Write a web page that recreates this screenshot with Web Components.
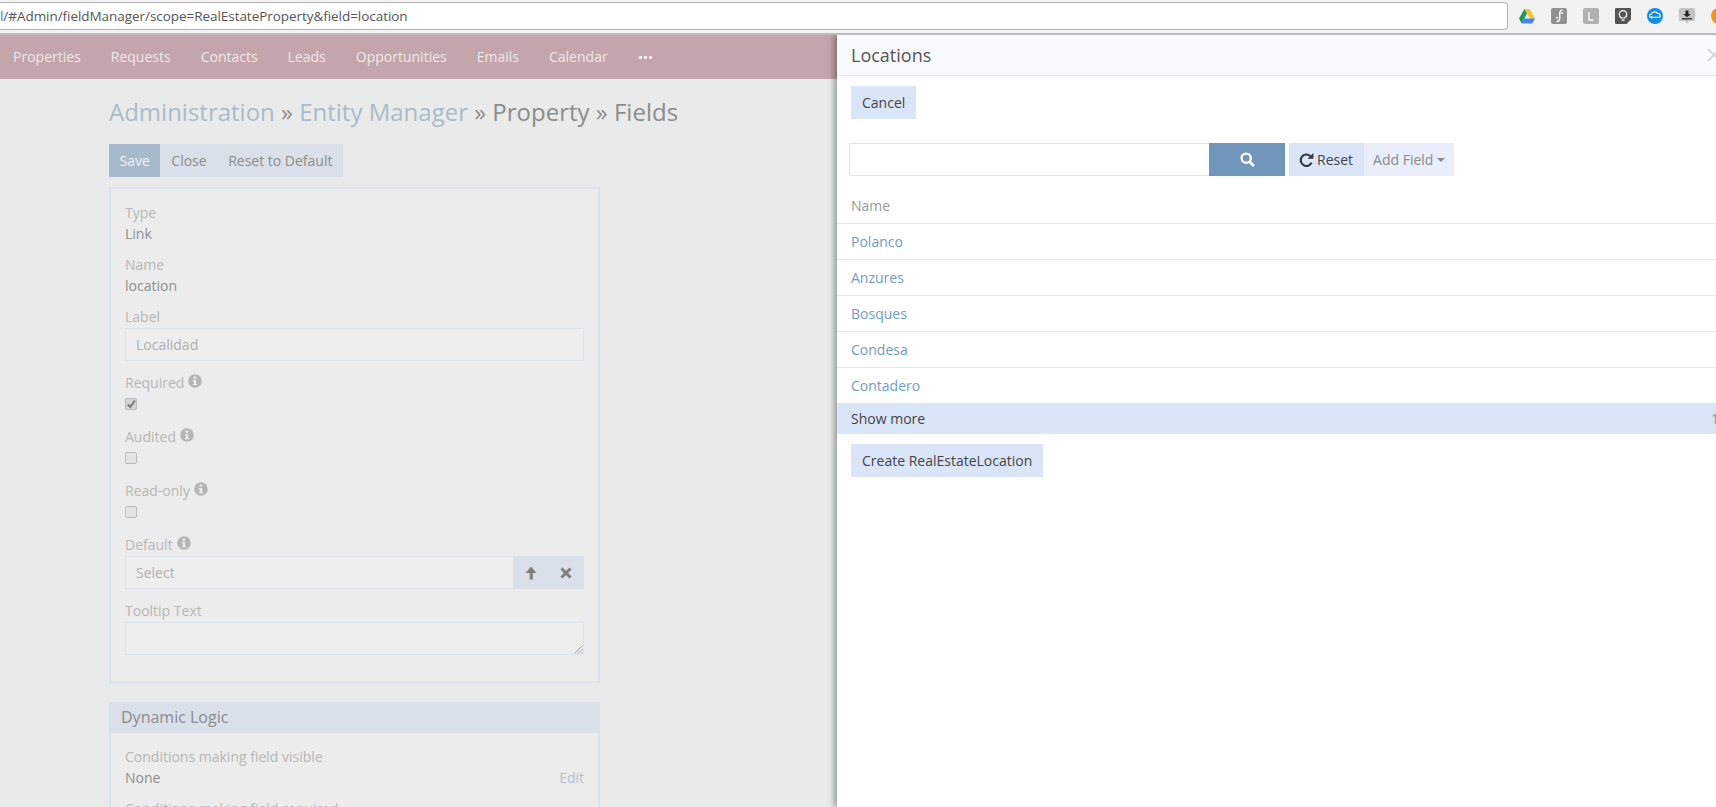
<!DOCTYPE html>
<html><head><meta charset="utf-8">
<style>
html,body{margin:0;padding:0;height:807px;overflow:hidden;background:#e9ebea;font:14px/20px "Open Sans",sans-serif}
</style></head>
<body>
<browser-bar></browser-bar>
<div style="position:relative;height:772px;overflow:hidden">
<app-nav></app-nav>
<admin-page></admin-page>
<locations-modal></locations-modal>
</div>
<script>
function def(name, html){
  customElements.define(name, class extends HTMLElement{
    constructor(){super();this.attachShadow({mode:'open'}).innerHTML=html;}
  });
}
const info='<svg width="14" height="14" viewBox="0 0 14 14" style="vertical-align:0;margin-left:4px"><circle cx="7" cy="7" r="6.8" fill="#b5b5b3"/><rect x="5.6" y="2.6" width="2.6" height="2.2" fill="#ececec"/><path d="M4.800 6h3.400v4h1v1.300H4.800V10h1V7.200h-1z" fill="#ececec"/></svg>';

def('browser-bar',`<style>
:host{display:flex;height:35px;box-sizing:border-box;background:#f2f2f2;border-bottom:2px solid #bcbcbc;padding-top:2px}
.url{flex:none;width:1508px;height:28px;box-sizing:border-box;background:#fff;border:1px solid #b4b4b4;border-left:0;border-radius:0 4px 4px 0;font:13.5px/26px "Open Sans",sans-serif;color:#555;letter-spacing:-.05px;white-space:nowrap}
.url b{font-weight:400;color:#1a8ad8}
.icons{display:flex;align-items:center;height:28px;margin-left:11px;gap:16px}
svg{display:block;flex:none}
</style>
<div class="url"><b>l</b>/#Admin/fieldManager/scope=RealEstateProperty&amp;field=location</div>
<div class="icons">
<svg width="16" height="15" viewBox="0 0 16 15"><path d="M5.400 0h5.200l5.400 9.600h-5.200z" fill="#f8c52c"/><path d="M5.400 0L8 4.600 2.700 14.400 0 9.600z" fill="#1a9c58"/><path d="M5.300 9.600H16l-2.600 4.800H2.700z" fill="#4584ef"/></svg>
<svg width="16" height="16" viewBox="0 0 16 16"><rect width="16" height="16" rx="2" fill="#909090"/><path d="M11.500 2.400C9.600 1.800 9 3.400 8.800 5.500c-.2 2.500.3 3.800-.3 6-.4 1.500-1.500 2.300-3 2" stroke="#fff" stroke-width="1.400" fill="none"/><circle cx="6" cy="9.800" r="1" fill="#fff"/><circle cx="11.200" cy="5.200" r="1" fill="#fff"/></svg>
<svg width="16" height="16" viewBox="0 0 16 16"><rect width="16" height="16" rx="2" fill="#b0b0b0"/><path d="M6 4v8h4.500" stroke="#fff" stroke-width="1.300" fill="none"/></svg>
<svg width="16" height="16" viewBox="0 0 16 16"><path d="M1 0h14a1 1 0 0 1 1 1v10.500L11.500 16H1a1 1 0 0 1-1-1V1a1 1 0 0 1 1-1z" fill="#555"/><path d="M6.300 10C5 8.800 4.300 7.800 4.300 6.400a3.700 3.700 0 0 1 7.400 0c0 1.400-.7 2.400-2 3.600zM6.500 12.200h3" stroke="#fff" stroke-width="1.200" fill="none"/></svg>
<svg width="16" height="16" viewBox="0 0 16 16"><circle cx="8" cy="8" r="8" fill="#0e8ee9"/><path d="M3.200 9.200C1.800 8 2.600 6 4.300 6 5 3.800 9 3 10.500 5.400c1.800-.2 3.300 1.300 2.700 3.800" stroke="#fff" stroke-width="1.200" fill="none"/><path d="M3 9.300l2.200-1.500v1h8v1h-8v1z" fill="#fff"/></svg>
<svg width="16" height="16" viewBox="0 0 16 16"><rect width="16" height="13" rx="1.500" fill="#c4c4c4"/><path d="M6.500 2.500h3V6h2.300L8 9.300 4.200 6h2.300z" fill="#222"/><rect x="3" y="10.200" width="10" height="1.200" fill="#222"/><path d="M6 13h4l-2 2.500z" fill="#c4c4c4"/></svg>
<svg width="16" height="16" viewBox="0 0 16 16"><circle cx="8" cy="8" r="8" fill="#f5950f"/></svg>
</div>`);

def('app-nav',`<style>
:host{display:flex;height:44px;background:#c4a5ac;color:#efe8e9;padding-left:13px;gap:30px;align-items:center;font-size:14px}
span{white-space:nowrap}
.d{display:flex;gap:2px;margin-left:1px}
.d i{width:3px;height:3px;background:#f1ebec}
</style>
<span>Properties</span><span>Requests</span><span>Contacts</span><span>Leads</span><span>Opportunities</span><span>Emails</span><span>Calendar</span><div class="d" aria-hidden="true"><i></i><i></i><i></i></div>`);

def('page-head',`<style>
:host{display:block;font-size:24px;line-height:34px;color:#8c8c8a;white-space:nowrap}
a{color:#a8bbcc}
i{font-style:normal}
</style><a>Administration</a> <i>»</i> <a>Entity Manager</a> <i>»</i> Property <i>»</i> Fields`);

def('action-bar',`<style>
:host{display:flex;height:33px;width:max-content;background:#d9e0ea;color:#8d8d8b;font-size:14px;line-height:33px}
span{padding:0 11px}
.p{background:#a6bacb;color:#eef1f3;padding:0 10.500px}
.s{padding:0 11px 0 10.500px}
</style><span class="p">Save</span><span>Close</span><span class="s">Reset to Default</span>`);

def('form-panel',`<style>
:host{display:block;width:491px;box-sizing:border-box;border:2px solid #dbe2ec;background:#ececec}
.h{display:none;height:31px;background:#d9e0ea;margin:-2px -2px 0;padding:0 12px;font-size:16px;line-height:31px;color:#8b8b8b}
:host([heading]) .h{display:block}
.b{padding:var(--pad,14px 14px 0);display:block}
</style><div class="h"><slot name="heading"></slot></div><div class="b"><slot></slot></div>`);

def('form-field',`<style>
:host{display:block;margin-bottom:var(--mb,10px)}
.l{color:#b7b7b5;font-size:14px;line-height:20px;white-space:nowrap}
</style><div class="l"><slot name="label"></slot></div><slot></slot>`);

def('text-value',`<style>:host{display:block;color:#8e8e8c;line-height:22px;font-size:14px}</style><slot></slot>`);
def('text-input',`<style>
:host{display:block;position:relative;height:33px;box-sizing:border-box;border:1px solid #dbe2ec;background:#eeeeee;color:#b0b0ae;padding-left:10px;line-height:31px;margin-top:1px}
</style><slot></slot>`);
def('check-box',`<style>
:host{display:block;width:12px;height:12px;box-sizing:border-box;border:1px solid #bcbcbc;border-radius:2px;background:#e4e4e4;margin-top:5px;position:relative}
svg{display:none;position:absolute;left:1px;top:0}
:host([checked]) svg{display:block}
:host([checked]){background:#d4d4d4}
</style><svg width="9" height="10" viewBox="0 0 9 10"><path d="M1 5.500l2.300 2.500L8 1.500" stroke="#7a7a7a" stroke-width="2" fill="none"/></svg>`);

def('link-input',`<style>
:host{display:flex;height:33px;box-sizing:border-box;margin-top:1px;color:#b0b0ae;line-height:31px}
.i{flex:1;border:1px solid #dbe2ec;border-right:0;padding-left:10px;background:#eeeeee}
.b{width:71px;background:#d9e0ea;display:flex;align-items:center;justify-content:space-around;padding:0 1px;box-sizing:border-box}
</style><div class="i">Select</div><div class="b">
<svg width="12" height="14" viewBox="0 0 12 14"><path d="M6 .5l5.500 6.500H7.800v6.500H4.700V7H.5z" fill="#7f7f7d"/></svg>
<svg width="12" height="12" viewBox="0 0 12 12"><path d="M1.500 1.500l9 9m0-9l-9 9" stroke="#7f7f7d" stroke-width="3"/></svg>
</div>`);

def('text-area',`<style>
:host{display:block;position:relative;height:33px;box-sizing:border-box;border:1px solid #dbe2ec;background:#eeeeee;margin-top:1px}
svg{position:absolute;right:0;bottom:0}
</style><svg width="10" height="10" viewBox="0 0 10 10"><path d="M1.500 9.500l8-8M5 9.500l4.500-4.500M8 9.500l1.500-1.500" stroke="#888" stroke-width=".8"/></svg>`);

def('admin-page',`<style>
:host{display:flex;flex-direction:column;padding:17px 0 0 109px}
page-head{margin-top:-1px}
action-bar{margin-top:15px}
form-panel.a{margin-top:10px;height:496px;box-sizing:border-box}
form-panel.c{margin-top:19px;--pad:14px 14px 0}
.row{display:flex;justify-content:space-between}
.edit{color:#afc0d0;line-height:22px}
form-field.k{--mb:17px}
form-field.i2{--mb:12px}
</style>
<page-head></page-head>
<action-bar></action-bar>
<form-panel class="a">
<form-field><span slot="label">Type</span><text-value>Link</text-value></form-field>
<form-field><span slot="label">Name</span><text-value>location</text-value></form-field>
<form-field style="--mb:12px"><span slot="label">Label</span><text-input>Localidad</text-input></form-field>
<form-field class="k"><span slot="label">Required${info}</span><check-box checked></check-box></form-field>
<form-field class="k"><span slot="label">Audited${info}</span><check-box></check-box></form-field>
<form-field class="k"><span slot="label">Read-only${info}</span><check-box></check-box></form-field>
<form-field class="i2"><span slot="label">Default${info}</span><link-input></link-input></form-field>
<form-field><span slot="label">Tooltip Text</span><text-area></text-area></form-field>
</form-panel>
<form-panel class="c" heading>
<span slot="heading">Dynamic Logic</span>
<form-field><span slot="label">Conditions making field visible</span><div class="row"><text-value>None</text-value><span class="edit">Edit</span></div></form-field>
<form-field><span slot="label">Conditions making field required</span><text-value>None</text-value></form-field>
</form-panel>`);

def('list-row',`<style>
:host{display:block;height:36px;box-sizing:border-box;border-top:1px solid #e0e8f5;padding-left:14px;line-height:35px;color:#729bc3}
</style><slot></slot>`);

def('locations-modal',`<style>
:host{position:absolute;left:837px;top:0;width:879px;height:772px;background:#fff;box-shadow:-3px 0 6px rgba(0,0,0,.35);color:#333}
.hd{height:41px;box-sizing:border-box;background:#f9fafc;border-bottom:1px solid #e6e6e6;padding-left:14px;font-size:18px;line-height:40px;color:#555;position:relative}
.x{position:absolute;right:-5px;top:13px}
.btn{display:inline-block;height:33px;line-height:33px;padding:0 11px;background:#dae6f8;color:#444}
.b1{padding:10px 14px 0;height:34px}
.search{display:flex;margin:23px 0 0 12px;height:33px}
.inp{width:360px;box-sizing:border-box;border:1px solid #dde5f3;border-right:0}
.go{width:76px;background:#7097bb;display:flex;align-items:center;justify-content:center}
.reset{margin-left:4px;background:#dae6f8;padding:0 11px 0 10px;line-height:33px;display:flex;align-items:center;gap:3px;color:#444}
.add{background:#e8eefa;color:#8a8a8a;padding:0 9px;line-height:33px;display:flex;align-items:center;gap:4px}
.car{width:0;height:0;border:4px solid transparent;border-top-color:#8a8a8a;border-bottom:0;margin-top:1px}
.name{padding-left:14px;margin-top:13px;line-height:34px;height:34px;color:#999}
.more{height:31px;background:#d9e6f8;padding-left:14px;line-height:31px;position:relative;color:#444}
.more b{font-weight:400;position:absolute;right:-3px;color:#999}
.b2{padding:10px 14px}
</style>
<div class="hd">Locations<svg class="x" width="14" height="14" viewBox="0 0 14 14"><path d="M1 1l12 12M13 1L1 13" stroke="#d4d4d4" stroke-width="1.800"/></svg></div>
<div class="b1"><span class="btn">Cancel</span></div>
<div class="search"><div class="inp"></div><div class="go"><svg width="15" height="15" viewBox="0 0 14 14"><circle cx="5.800" cy="5.800" r="4.300" stroke="#fff" stroke-width="2.200" fill="none"/><path d="M9 9l4 4" stroke="#fff" stroke-width="2.600"/></svg></div>
<div class="reset"><svg width="15" height="16" viewBox="0 0 13 14"><path d="M11 9.300A5 5 0 1 1 9.800 3.500" stroke="#333" stroke-width="1.800" fill="none"/><path d="M12.500 .8v5.200H7.300z" fill="#333"/></svg>Reset</div>
<div class="add">Add Field<span class="car"></span></div></div>
<div class="name">Name</div>
<list-row>Polanco</list-row><list-row>Anzures</list-row><list-row>Bosques</list-row><list-row>Condesa</list-row><list-row>Contadero</list-row>
<div class="more">Show more<b>1</b></div>
<div class="b2"><span class="btn">Create RealEstateLocation</span></div>`);
</script>
</body></html>
